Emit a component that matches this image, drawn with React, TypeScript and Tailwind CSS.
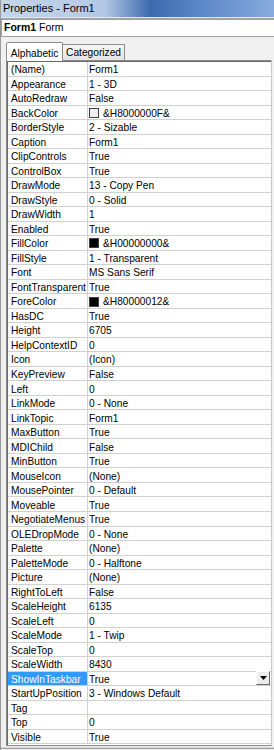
import React from "react";

type Prop = { name: string; value: string; swatch?: string };

const props: Prop[] = [
  { name: "(Name)", value: "Form1" },
  { name: "Appearance", value: "1 - 3D" },
  { name: "AutoRedraw", value: "False" },
  { name: "BackColor", value: "&H8000000F&", swatch: "#f0f0f0" },
  { name: "BorderStyle", value: "2 - Sizable" },
  { name: "Caption", value: "Form1" },
  { name: "ClipControls", value: "True" },
  { name: "ControlBox", value: "True" },
  { name: "DrawMode", value: "13 - Copy Pen" },
  { name: "DrawStyle", value: "0 - Solid" },
  { name: "DrawWidth", value: "1" },
  { name: "Enabled", value: "True" },
  { name: "FillColor", value: "&H00000000&", swatch: "#000000" },
  { name: "FillStyle", value: "1 - Transparent" },
  { name: "Font", value: "MS Sans Serif" },
  { name: "FontTransparent", value: "True" },
  { name: "ForeColor", value: "&H80000012&", swatch: "#000000" },
  { name: "HasDC", value: "True" },
  { name: "Height", value: "6705" },
  { name: "HelpContextID", value: "0" },
  { name: "Icon", value: "(Icon)" },
  { name: "KeyPreview", value: "False" },
  { name: "Left", value: "0" },
  { name: "LinkMode", value: "0 - None" },
  { name: "LinkTopic", value: "Form1" },
  { name: "MaxButton", value: "True" },
  { name: "MDIChild", value: "False" },
  { name: "MinButton", value: "True" },
  { name: "MouseIcon", value: "(None)" },
  { name: "MousePointer", value: "0 - Default" },
  { name: "Moveable", value: "True" },
  { name: "NegotiateMenus", value: "True" },
  { name: "OLEDropMode", value: "0 - None" },
  { name: "Palette", value: "(None)" },
  { name: "PaletteMode", value: "0 - Halftone" },
  { name: "Picture", value: "(None)" },
  { name: "RightToLeft", value: "False" },
  { name: "ScaleHeight", value: "6135" },
  { name: "ScaleLeft", value: "0" },
  { name: "ScaleMode", value: "1 - Twip" },
  { name: "ScaleTop", value: "0" },
  { name: "ScaleWidth", value: "8430" },
  { name: "ShowInTaskbar", value: "True" },
  { name: "StartUpPosition", value: "3 - Windows Default" },
  { name: "Tag", value: "" },
  { name: "Top", value: "0" },
  { name: "Visible", value: "True" },
];

const SELECTED = "ShowInTaskbar";

function Row({ p }: { p: Prop }) {
  const selected = p.name === SELECTED;
  return (
    <div className="flex h-[14.53px] shrink-0 border-b border-[#d0d0d0] leading-none">
      <div
        className={
          selected
            ? "w-[80px] shrink-0 flex items-center pt-[3px] pl-[3px] border-r border-[#d0d0d0] bg-[#3399ff] text-white overflow-hidden"
            : "w-[80px] shrink-0 flex items-center pt-[3px] pl-[3px] border-r border-[#d0d0d0] overflow-hidden"
        }
      >
        <span className="whitespace-nowrap">{p.name}</span>
      </div>
      <div className="flex-1 flex items-center pl-[1px] min-w-0">
        {p.swatch && (
          <span
            className="w-[10px] h-[10px] shrink-0 border border-[#404040] mr-[4px] mt-[1px]"
            style={{ backgroundColor: p.swatch }}
          />
        )}
        <span className="whitespace-nowrap flex-1 pt-[3px]">{p.value}</span>
        {selected && (
          <div className="w-[14px] h-[14px] shrink-0 bg-[#ececec] border border-t-[#ffffff] border-l-[#ffffff] border-b-[#6a6a6a] border-r-[#6a6a6a] flex items-center justify-center mr-[1px]">
            <svg width="7" height="4" viewBox="0 0 7 4">
              <path d="M0 0H7L3.5 4Z" fill="#000" />
            </svg>
          </div>
        )}
      </div>
    </div>
  );
}

export default function App() {
  return (
    <div className="w-[274px] h-[750px] bg-[#f0f0f0] overflow-hidden flex flex-col font-['Liberation_Sans',Arial,sans-serif] text-[10.2px] text-black border-l border-[#9a9a9a]">
      {/* Title bar */}
      <div className="h-[17px] shrink-0 flex items-center pl-[2px] text-[11px] bg-[linear-gradient(90deg,#c4d5ec_0%,#b3c8e4_38%,#3d69b0_55%,#5a86c6_72%,#88abdf_100%)]">
        Properties - Form1
      </div>
      <div className="h-[2px] shrink-0 bg-[#dfe6ef] border-b border-[#a5a5a5]" />

      {/* Object combo */}
      <div className="h-[18px] shrink-0 bg-white border border-[#a0a0a0] border-r-0 flex items-center pl-[2px] text-[10.5px]">
        <span className="font-bold">Form1</span>
        <span className="ml-[3px]">Form</span>
      </div>

      {/* Tabs */}
      <div className="h-[23px] shrink-0 flex items-end pl-[5px]">
        <div className="h-[19px] w-[57px] bg-white border border-b-0 border-[#8c8c8c] rounded-t-[2px] flex items-start justify-center pt-[3px] relative top-[1px] z-10">
          Alphabetic
        </div>
        <div className="h-[16px] w-[62px] bg-[linear-gradient(#f6f6f6,#e4e4e4)] border border-b-0 border-l-0 border-[#8c8c8c] flex items-center justify-center">
          Categorized
        </div>
      </div>

      {/* Grid */}
      <div className="h-[686px] shrink-0 ml-[5px] mr-[2px] border border-[#8c8c8c] border-r-[#c8c8c8] bg-white flex flex-col overflow-hidden">
        <div className="flex-1 min-h-0 flex flex-col border-l border-t border-[#696969]">
          {props.map((p) => (
            <Row key={p.name} p={p} />
          ))}
        </div>
      </div>
      <div className="h-[1px] shrink-0 bg-[#d8d8d8] mt-[1px]" />
      <div className="flex-1 border-t border-[#a0a0a0]" />
    </div>
  );
}
